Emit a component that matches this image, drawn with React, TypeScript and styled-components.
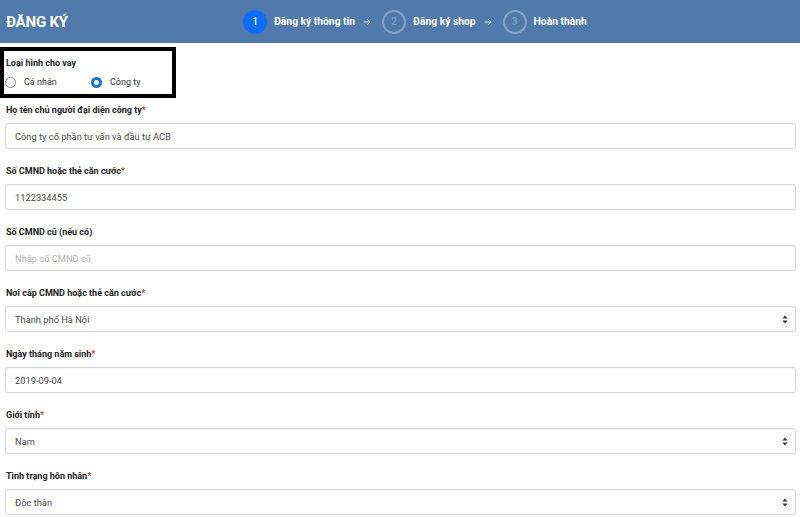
import React from 'react'
import styled, { createGlobalStyle } from 'styled-components'

const GlobalStyle = createGlobalStyle`
	html, body {
		margin: 0;
		padding: 0;
		background: #fff;
		font-family: Roboto, "Noto Sans", Arial, sans-serif;
	}
	* {
		box-sizing: border-box;
	}
`

const Page = styled.div`
	position: relative;
	width: 800px;
	height: 517px;
	overflow: hidden;
	background: #fff;
`

const Header = styled.header`
	height: 43px;
	background: #4f7aab;
	display: flex;
	align-items: center;
	padding: 0 6px;
`

const Title = styled.h1`
	margin: 0;
	width: 237px;
	color: #fff;
	font-size: 15px;
	font-weight: 700;
	letter-spacing: -0.2px;
`

const Steps = styled.ol`
	display: flex;
	align-items: center;
	margin: 0;
	padding: 0;
	list-style: none;
`

const Step = styled.li`
	display: flex;
	align-items: center;
	color: #fff;
	font-size: 10.3px;
	font-weight: 700;
	margin-right: 11px;
`

const StepCircle = styled.span<{ $active?: boolean }>`
	width: 24px;
	height: 24px;
	border-radius: 50%;
	display: flex;
	align-items: center;
	justify-content: center;
	margin-right: 7px;
	font-size: 10px;
	font-weight: 500;
	background: ${(p) => (p.$active ? '#0d6efd' : 'transparent')};
	border: 2px solid ${(p) => (p.$active ? '#0d6efd' : 'rgba(255,255,255,0.3)')};
	color: ${(p) => (p.$active ? '#fff' : 'rgba(255,255,255,0.3)')};
`

const ArrowIcon = styled.svg`
	margin-left: 8px;
	opacity: 0.85;
`

const Arrow = () => (
	<ArrowIcon width="8" height="8" viewBox="0 0 8 8">
		<path d="M0.5 4 H7 M4.2 1.2 L7 4 L4.2 6.8" stroke="#fff" strokeWidth="1" fill="none" />
	</ArrowIcon>
)

const Form = styled.form`
	padding: 13px 4px 0 5px;
`

const LoanType = styled.fieldset`
	border: none;
	margin: 0 0 14px;
	padding: 0;
`

const Label = styled.div`
	height: 14px;
	line-height: 14px;
	font-size: 9px;
	font-weight: 700;
	color: #222;
	padding-left: 1px;
`

const Required = styled.span`
	color: #c0392b;
`

const RadioRow = styled.div`
	display: flex;
	align-items: center;
	height: 14px;
	margin-top: 5px;
`

const RadioOption = styled.label`
	display: flex;
	align-items: center;
	width: 86px;
	font-size: 9px;
	color: #333;
`

const RadioDot = styled.span<{ $checked?: boolean }>`
	width: 11px;
	height: 11px;
	border-radius: 50%;
	margin-right: 8px;
	border: ${(p) => (p.$checked ? '3px solid #1a6fe0' : '1px solid #888')};
	background: #fff;
`

const Field = styled.div`
	margin-bottom: 15px;
`

const Control = styled.div<{ $placeholder?: boolean }>`
	margin-top: 6px;
	height: 26px;
	border: 1px solid #d4d4d4;
	border-radius: 3px;
	display: flex;
	align-items: center;
	justify-content: space-between;
	padding: 0 7px 0 9px;
	font-size: 9.3px;
	color: ${(p) => (p.$placeholder ? '#b0b0b0' : '#4a4a4a')};
	box-shadow: inset 0 1px 1px rgba(0, 0, 0, 0.03);
`

const Annotation = styled.div`
	position: absolute;
	left: 0;
	top: 47px;
	width: 176px;
	height: 51px;
	border: 4px solid #000;
	pointer-events: none;
`

const SelectArrows = () => (
	<svg width="6" height="9" viewBox="0 0 6 9">
		<path d="M3 0.5 L5.6 3.6 L0.4 3.6 Z" fill="#333" />
		<path d="M3 8.5 L5.6 5.4 L0.4 5.4 Z" fill="#333" />
	</svg>
)

interface FieldData {
	label: string
	value: string
	required?: boolean
	placeholder?: boolean
	select?: boolean
}

const fields: FieldData[] = [
	{ label: 'Họ tên chủ người đại diện công ty', value: 'Công ty cổ phần tư vấn và đầu tư ACB', required: true },
	{ label: 'Số CMND hoặc thẻ căn cước', value: '1122334455', required: true },
	{ label: 'Số CMND cũ (nếu có)', value: 'Nhập số CMND cũ', placeholder: true },
	{ label: 'Nơi cấp CMND hoặc thẻ căn cước', value: 'Thành phố Hà Nội', required: true, select: true },
	{ label: 'Ngày tháng năm sinh', value: '2019-09-04', required: true },
	{ label: 'Giới tính', value: 'Nam', required: true, select: true },
	{ label: 'Tình trạng hôn nhân', value: 'Độc thân', required: true, select: true },
]

const App: React.FC = () => {
	return (
		<Page>
			<GlobalStyle />
			<Header>
				<Title>ĐĂNG KÝ</Title>
				<Steps>
					<Step>
						<StepCircle $active>1</StepCircle>
						Đăng ký thông tin
						<Arrow />
					</Step>
					<Step>
						<StepCircle>2</StepCircle>
						Đăng ký shop
						<Arrow />
					</Step>
					<Step>
						<StepCircle>3</StepCircle>
						Hoàn thành
					</Step>
				</Steps>
			</Header>
			<Form>
				<LoanType>
					<Label>Loại hình cho vay</Label>
					<RadioRow>
						<RadioOption>
							<RadioDot />
							Cá nhân
						</RadioOption>
						<RadioOption>
							<RadioDot $checked />
							Công ty
						</RadioOption>
					</RadioRow>
				</LoanType>
				{fields.map((f) => (
					<Field key={f.label}>
						<Label>
							{f.label}
							{f.required && <Required>*</Required>}
						</Label>
						<Control $placeholder={f.placeholder}>
							<span>{f.value}</span>
							{f.select && <SelectArrows />}
						</Control>
					</Field>
				))}
			</Form>
			<Annotation />
		</Page>
	)
}

export default App
